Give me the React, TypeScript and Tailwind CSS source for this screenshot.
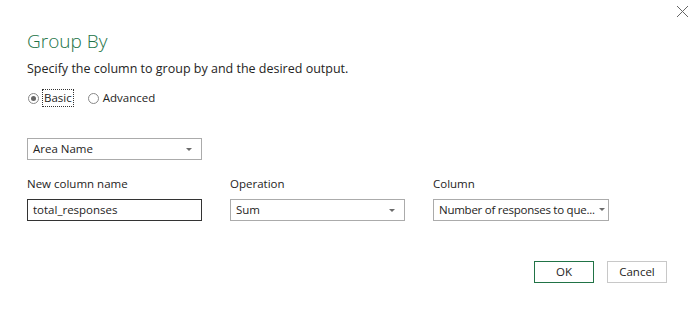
import React from "react";

const Caret = () => (
  <svg width="6" height="3" viewBox="0 0 6 3" className="shrink-0">
    <path d="M0 0h6L3 3z" fill="#6b6b6b" />
  </svg>
);

export default function App() {
  return (
    <div
      className="relative w-[694px] h-[311px] bg-white text-[#252423] overflow-hidden"
      style={{ fontFamily: '"Open Sans", "Noto Sans", sans-serif' }}
    >
      <button className="absolute left-[676px] top-[5px] w-[13px] h-[13px]">
        <svg width="13" height="13" viewBox="0 0 13 13">
          <path d="M1 1L12 12M12 1L1 12" stroke="#666" strokeWidth="1" />
        </svg>
      </button>
      <div className="pl-[27px] pt-[27px]">
        <div className="text-[19px] leading-[28px] font-light text-[#217346]">Group By</div>
        <div className="mt-[5px] text-[12.5px] leading-[18px]">
          Specify the column to group by and the desired output.
        </div>
        <div className="mt-[11px] flex items-center text-[11.5px] leading-[16px] h-[18px]">
          <span className="w-[11px] h-[11px] rounded-full border border-[#888] flex items-center justify-center ml-[1px]">
            <span className="w-[5px] h-[5px] rounded-full bg-[#666]" />
          </span>
          <span className="ml-[3px] px-[1px] border border-dotted border-[#333]">Basic</span>
          <span className="ml-[14px] w-[11px] h-[11px] rounded-full border border-[#888]" />
          <span className="ml-[4px]">Advanced</span>
        </div>
        <div className="mt-[31px] w-[175px] h-[22px] border border-[#ababab] flex items-center justify-between pl-[5px] pr-[9px] text-[11.5px]">
          <span>Area Name</span>
          <Caret />
        </div>
        <div className="mt-[16px] flex text-[11.5px]">
          <div className="w-[203px]">
            <div className="leading-[16px] h-[23px]">New column name</div>
            <div className="w-[175px] h-[22px] border border-[#333] flex items-center pl-[5px]">
              total_responses
            </div>
          </div>
          <div className="w-[203px]">
            <div className="leading-[16px] h-[23px]">Operation</div>
            <div className="w-[175px] h-[22px] border border-[#ababab] flex items-center justify-between pl-[5px] pr-[9px]">
              <span>Sum</span>
              <Caret />
            </div>
          </div>
          <div>
            <div className="leading-[16px] h-[23px]">Column</div>
            <div className="relative w-[176px] h-[22px] border border-[#ababab] flex items-center pl-[5px]">
              <span className="whitespace-nowrap tracking-[-0.25px]">Number of responses to que...</span>
              <span className="absolute right-[3px] top-[8px] flex">
                <Caret />
              </span>
            </div>
          </div>
        </div>
      </div>
      <div className="absolute left-[534px] top-[261px] flex gap-[13px] text-[11.5px]">
        <button className="w-[60px] h-[22px] border border-[#217346] text-[#252423]">OK</button>
        <button className="w-[60px] h-[22px] border border-[#c8c8c8] text-[#252423]">Cancel</button>
      </div>
    </div>
  );
}
